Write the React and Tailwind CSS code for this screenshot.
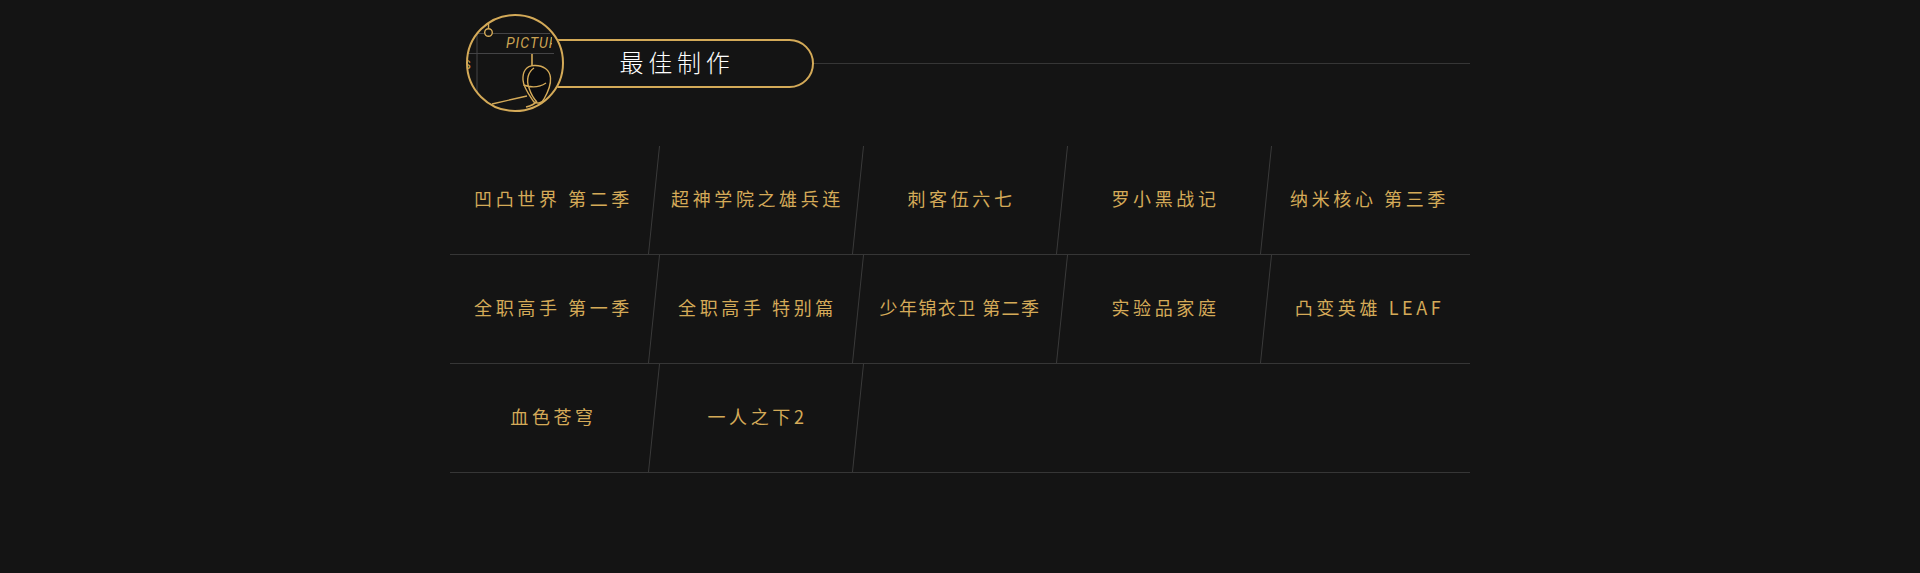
const rows = [
  [
    { title: '凹凸世界 第二季' },
    { title: '超神学院之雄兵连' },
    { title: '刺客伍六七' },
    { title: '罗小黑战记' },
    { title: '纳米核心 第三季' },
  ],
  [
    { title: '全职高手 第一季' },
    { title: '全职高手 特别篇' },
    { title: '少年锦衣卫 第二季', tight: true },
    { title: '实验品家庭' },
    { title: '凸变英雄 LEAF' },
  ],
  [{ title: '血色苍穹' }, { title: '一人之下2' }],
]

function Badge() {
  return (
    <svg viewBox="0 0 98 98" className="relative z-10 size-[98px] shrink-0" fill="none" aria-hidden="true">
      <defs>
        <clipPath id="badge">
          <circle cx="49" cy="49" r="48" />
        </clipPath>
        <clipPath id="caption">
          <rect x="0" y="20" width="86" height="20" />
        </clipPath>
      </defs>
      <circle cx="49" cy="49" r="49" fill="#141414" />
      <g clipPath="url(#badge)">
        <path d="M11 10V80M11 19.5H84M2 39.5H88" stroke="#444446" strokeWidth="1" />
        <g stroke="#d4aa58" strokeWidth="1.4">
          <path d="M22.5 6V14.5" />
          <circle cx="22.5" cy="18.5" r="3.8" fill="#141414" />
          <path d="M66 40V52" strokeWidth="1.6" />
          <path d="M26 90L61 82" />
          <path d="M68 51.5C60 52 56.5 58 57 66C57.5 74 64 82 68 88C72 90 76 89 78 85C82 78 85 70 84.5 64C84 56 77 51 68 51.5Z" fill="#0c0c0e" />
          <path d="M68 54C62 58 60 66 63 74C65 80 67 84 71 88M57.5 71C66 74 74 73 80 69M70 88C68 91 64 92 60 93" />
        </g>
        <g fill="#cca453" fontSize="13" fontFamily="Roboto, sans-serif">
          <text x="40" y="34" fontSize="14" fontStyle="italic" letterSpacing="1" clipPath="url(#caption)">
            PICTUR
          </text>
          <text x="-3" y="55">S</text>
        </g>
      </g>
      <circle cx="49" cy="49" r="48" stroke="#d4aa58" strokeWidth="2" />
    </svg>
  )
}

// slanted rule on the right edge of a cell
function Slash() {
  return (
    <svg className="absolute -right-1.5 top-0 h-full w-3" viewBox="0 0 12 108" preserveAspectRatio="none" aria-hidden="true">
      <path d="M11.5 0L0.5 108" stroke="#3a3a3a" strokeWidth="1" />
    </svg>
  )
}

function Cell({ title, tight, last }) {
  return (
    <li className="relative flex items-center justify-center pb-1">
      <span className={tight ? 'tracking-[0.08em]' : 'pl-[3px] tracking-[0.2em]'}>{title}</span>
      {!last && <Slash />}
    </li>
  )
}

export default function App() {
  return (
    <main className="min-h-screen bg-[#141414] font-['Noto_Sans_CJK_SC',sans-serif]">
      <section className="mx-auto max-w-[1020px] pt-3.5">
        <header className="flex items-center pl-4">
          <Badge />
          <h2 className="-ml-6 flex h-[49px] w-[274px] items-center justify-center rounded-r-full border-2 border-[#d4aa58] pb-0.5 text-2xl font-light tracking-[0.2em] text-white">
            最佳制作
          </h2>
          <div className="h-px flex-1 bg-[#363636]" />
        </header>
        <div className="mt-[34px]">
          {rows.map((row, i) => (
            <ul key={i} className="grid h-[109px] grid-cols-5 whitespace-nowrap border-b border-[#363636] text-lg text-[#d4aa58]">
              {row.map((item, j) => (
                <Cell key={item.title} {...item} last={j === 4} />
              ))}
            </ul>
          ))}
        </div>
      </section>
    </main>
  )
}
